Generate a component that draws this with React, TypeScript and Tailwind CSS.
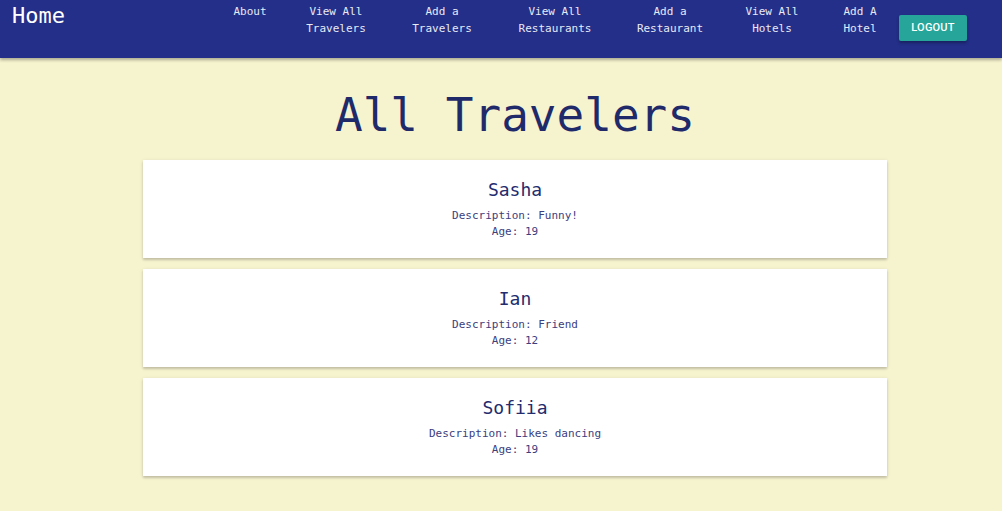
const links = [
  { top: 'About', bottom: '', w: 'w-[62px]' },
  { top: 'View All', bottom: 'Travelers', w: 'w-[110px]' },
  { top: 'Add a', bottom: 'Travelers', w: 'w-[102px]' },
  { top: 'View All', bottom: 'Restaurants', w: 'w-[124px]' },
  { top: 'Add a', bottom: 'Restaurant', w: 'w-[106px]' },
  { top: 'View All', bottom: 'Hotels', w: 'w-[98px]' },
  { top: 'Add A', bottom: 'Hotel', w: 'w-[78px]' },
];

const travelers = [
  { name: 'Sasha', description: 'Funny!', age: 19 },
  { name: 'Ian', description: 'Friend', age: 12 },
  { name: 'Sofiia', description: 'Likes dancing', age: 19 },
];

export default function App() {
  return (
    <div className="min-h-[511px] bg-[#f6f3cf] font-['DejaVu_Sans_Mono',monospace]">
      {/* Navbar */}
      <nav className="flex h-[58px] items-start bg-[#232f88] pr-[35px] shadow-[0_2px_3px_rgba(0,0,0,0.3)]">
        <a className="ml-[12px] mt-[2px] text-[22px] leading-[28px] text-white">Home</a>
        <ul className="ml-auto flex items-start">
          {links.map((l, i) => (
            <li
              key={i}
              className={`${l.w} flex flex-col items-center pt-[3px] text-[11px] leading-[16.5px] text-[#e8eaf6]`}
            >
              <span className="pt-[1px]">{l.top}</span>
              {l.bottom && <span>{l.bottom}</span>}
            </li>
          ))}
        </ul>
        <button className="mt-[15px] h-[26px] w-[68px] rounded-[2px] bg-[#26a69a] font-['Roboto',sans-serif] text-[11px] font-medium tracking-[0.2px] text-white shadow-[0_2px_3px_rgba(0,0,0,0.3)]">
          LOGOUT
        </button>
      </nav>

      {/* Page */}
      <h1 className="mt-[29px] ml-[143px] w-[744px] text-center text-[46px] leading-[56px] text-[#1f2a6b]">
        All Travelers
      </h1>

      <div className="mt-[17px] ml-[143px] flex w-[744px] flex-col gap-[11px] pb-[35px]">
        {travelers.map((t) => (
          <div
            key={t.name}
            className="flex h-[98px] flex-col items-center bg-white pt-[18px] shadow-[0_2px_2px_rgba(0,0,0,0.14),0_1px_4px_rgba(0,0,0,0.12)]"
          >
            <div className="text-[18px] leading-[24px] text-[#232c6e]">{t.name}</div>
            <div className="mt-[6px] text-[11px] leading-[16px] text-[#3b4080]">
              Description: {t.description}
            </div>
            <div className="text-[11px] leading-[16px] text-[#3b4080]">Age: {t.age}</div>
          </div>
        ))}
      </div>
    </div>
  );
}
